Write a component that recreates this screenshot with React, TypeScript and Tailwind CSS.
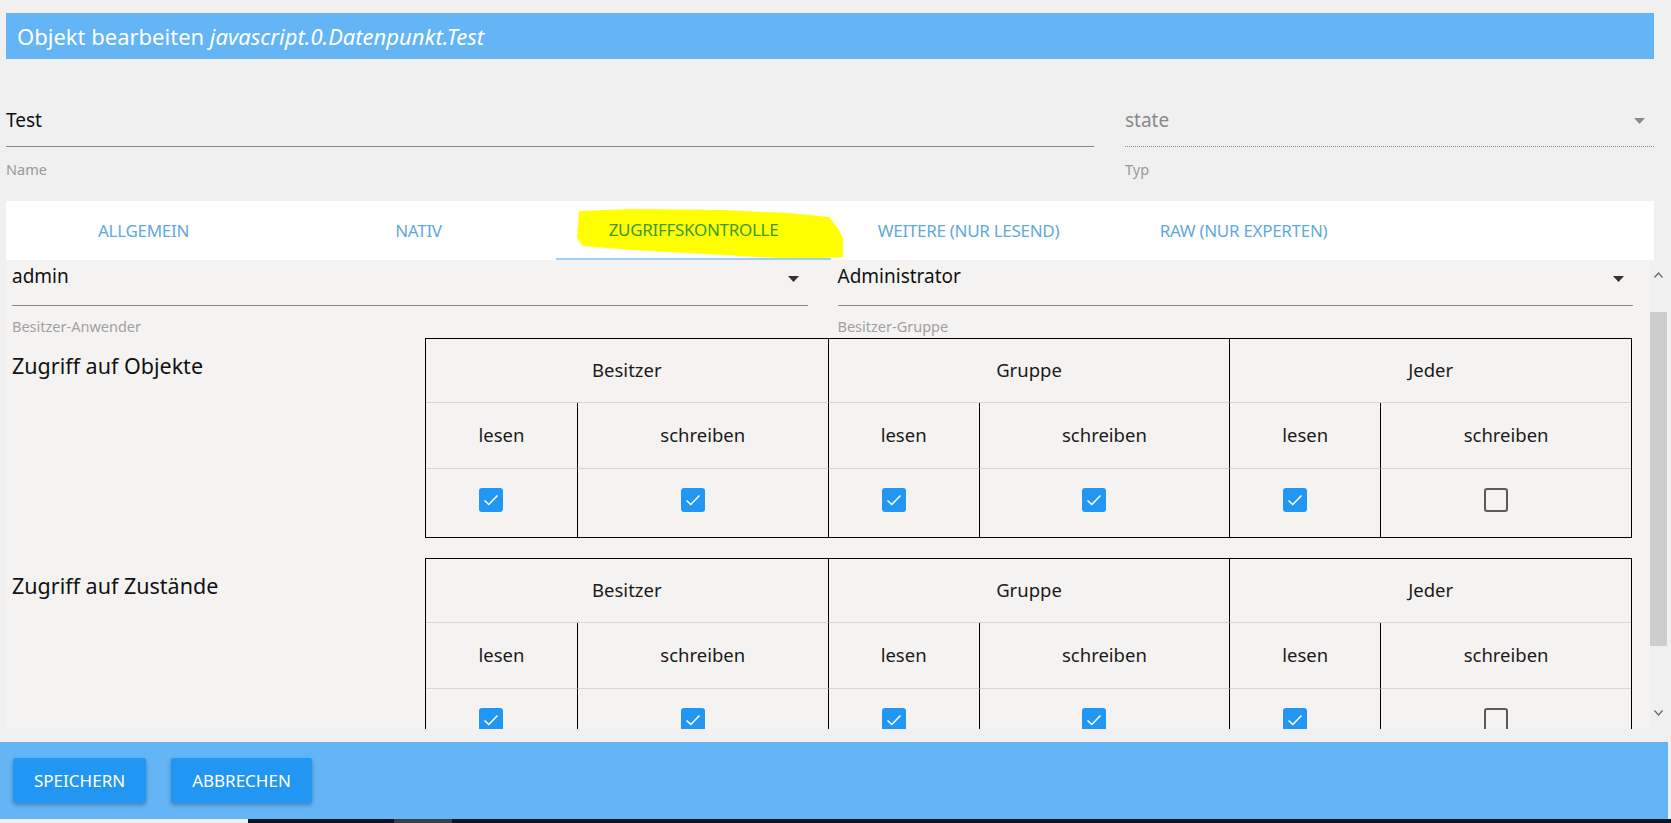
import React from "react";

const font = { fontFamily: '"Noto Sans", "Open Sans", Arial, sans-serif' };

function Arrow({ color = "#333" }: { color?: string }) {
  return (
    <svg width="11" height="6" viewBox="0 0 11 6" className="shrink-0">
      <path d="M0 0 L11 0 L5.5 6 Z" fill={color} />
    </svg>
  );
}

function Check({ on }: { on: boolean }) {
  if (!on)
    return <span className="block h-[24px] w-[24px] rounded-[3px] border-2 border-[#5a5a5a]" />;
  return (
    <span className="grid h-[24px] w-[24px] place-items-center rounded-[3px] bg-[#2196f3]">
      <svg width="16" height="12" viewBox="0 0 16 12">
        <path d="M1.5 6.5 L5.8 10.5 L14.5 1.5" fill="none" stroke="#fff" strokeWidth="1.6" />
      </svg>
    </span>
  );
}

const groups = ["Besitzer", "Gruppe", "Jeder"];
const checks = [true, true, true, true, true, false];

function AclTable() {
  return (
    <div className="grid w-[1207px] shrink-0 grid-cols-[151fr_251fr_151fr_251fr_151fr_251fr] border border-black text-[18.5px] text-[#1a1a1a]">
      {groups.map((g, i) => (
        <div
          key={g}
          className={`col-span-2 flex h-[64px] items-center justify-center border-b border-[#d6d6d6] ${i > 0 ? "border-l border-l-black" : ""}`}
        >
          {g}
        </div>
      ))}
      {checks.map((_, i) => (
        <div
          key={"h" + i}
          className={`flex h-[66px] items-center justify-center border-b border-[#d6d6d6] ${i > 0 ? "border-l border-l-black" : ""}`}
        >
          {i % 2 === 0 ? "lesen" : "schreiben"}
        </div>
      ))}
      {checks.map((c, i) => (
        <div
          key={"c" + i}
          className={`flex h-[68px] items-center justify-center pb-[6px] pr-[20px] ${i > 0 ? "border-l border-black" : ""}`}
        >
          <Check on={c} />
        </div>
      ))}
    </div>
  );
}

function Section({ title }: { title: string }) {
  return (
    <div className="flex">
      <div className="w-[413px] shrink-0 pt-[12px] text-[21.5px] text-[#111]">{title}</div>
      <AclTable />
    </div>
  );
}

const tabs = ["ALLGEMEIN", "NATIV", "ZUGRIFFSKONTROLLE", "WEITERE (NUR LESEND)", "RAW (NUR EXPERTEN)"];

export default function App() {
  return (
    <div style={font} className="flex h-[823px] w-[1671px] flex-col overflow-hidden bg-[#f0f0f0]">
      {/* title */}
      <div className="pl-[6px] pr-[17px] pt-[13px]">
        <div className="flex h-[46px] items-center bg-[#64b5f6] pl-[11px] text-[22px] text-white">
          Objekt bearbeiten&nbsp;<i>javascript.0.Datenpunkt.Test</i>
        </div>
      </div>

      {/* name / type */}
      <div className="flex gap-[31px] pl-[6px] pr-[17px] pt-[45px]">
        <div className="w-[1088px]">
          <div className="h-[43px] border-b border-[#8a8a8a] pt-[2px] text-[19px] text-[#111]">Test</div>
          <div className="pt-[12px] text-[14.5px] text-[#9a9a9a]">Name</div>
        </div>
        <div className="flex-1">
          <div className="flex h-[43px] items-start justify-between border-b border-dotted border-[#8a8a8a] pt-[2px] text-[19px] text-[#8a8a8a]">
            <span>state</span>
            <span className="pr-[9px] pt-[12px]">
              <Arrow color="#8a8a8a" />
            </span>
          </div>
          <div className="pt-[12px] text-[14.5px] text-[#9a9a9a]">Typ</div>
        </div>
      </div>

      {/* tabs */}
      <div className="pl-[6px] pr-[17px] pt-[20px]">
        <div className="relative flex h-[59px] bg-white">
          <svg className="absolute left-[567px] top-[7px]" width="274" height="52" viewBox="0 0 274 52">
            <path
              d="M6 3 L60 1 L150 2 L215 5 L256 9 L266 22 L270 30 L270 49 L225 51 L150 47 L60 42 L10 38 L4 30 Z"
              fill="#ffff00"
            />
          </svg>
          {tabs.map((t, i) => (
            <div
              key={t}
              className={`relative flex w-[275px] items-center justify-center text-[17px] tracking-[-0.3px] ${i === 2 ? "border-b-2 border-[#9fd0f3] text-[#3a9a2a]" : "text-[#5fa9e0]"}`}
            >
              {t}
            </div>
          ))}
        </div>
      </div>

      {/* content */}
      <div className="flex h-[469px] pl-[6px]">
        <div className="flex flex-1 flex-col overflow-hidden bg-[#f5f3f1] pl-[6px] pr-[17px]">
          <div className="flex gap-[30px]">
            {[
              ["admin", "Besitzer-Anwender"],
              ["Administrator", "Besitzer-Gruppe"],
            ].map(([v, l]) => (
              <div key={v} className="flex-1">
                <div className="flex h-[46px] items-start justify-between border-b border-[#8a8a8a] pt-[2px] text-[19px] text-[#111]">
                  <span>{v}</span>
                  <span className="pr-[9px] pt-[14px]">
                    <Arrow />
                  </span>
                </div>
                <div className="pt-[10px] text-[14.5px] text-[#a0a0a0]">{l}</div>
              </div>
            ))}
          </div>
          <div className="flex flex-col gap-[20px]">
            <Section title="Zugriff auf Objekte" />
            <Section title="Zugriff auf Zustände" />
          </div>
        </div>
        {/* scrollbar */}
        <div className="flex w-[21px] flex-col items-start bg-[#f0f0f0]">
          <div className="flex h-[52px] w-[17px] justify-center pt-[12px]">
            <svg width="9" height="6" viewBox="0 0 9 6">
              <path d="M0.5 5.5 L4.5 1 L8.5 5.5" fill="none" stroke="#666" strokeWidth="1.2" />
            </svg>
          </div>
          <div className="h-[334px] w-[17px] bg-[#cdcdcd]" />
          <div className="flex h-[83px] w-[17px] items-end justify-center pb-[13px]">
            <svg width="9" height="6" viewBox="0 0 9 6">
              <path d="M0.5 0.5 L4.5 5 L8.5 0.5" fill="none" stroke="#666" strokeWidth="1.2" />
            </svg>
          </div>
        </div>
      </div>

      {/* footer */}
      <div className="mt-[13px] flex h-[77px] w-[1668px] shrink-0 items-center gap-[25px] bg-[#64b5f6] pl-[13px]">
        {["SPEICHERN", "ABBRECHEN"].map((b) => (
          <button
            key={b}
            className="h-[45px] rounded-[3px] bg-[#2196f3] px-[21px] text-[17px] text-white shadow-[0_2px_4px_rgba(0,0,0,0.3)]"
          >
            {b}
          </button>
        ))}
      </div>
      <div className="flex h-[5px] shrink-0">
        <div className="w-[248px] bg-[#f0f0f0]" />
        <div className="w-[146px] bg-[#0b1420]" />
        <div className="w-[58px] bg-[#3a3f48]" />
        <div className="flex-1 bg-[#0b1420]" />
      </div>
    </div>
  );
}
